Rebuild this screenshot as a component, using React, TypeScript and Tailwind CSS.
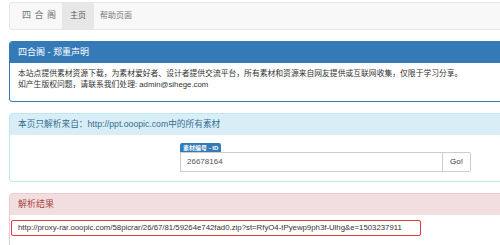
import React from "react";

export default function App() {
  return (
    <div
      className="w-[500px] h-[245px] overflow-hidden bg-white text-[#333] font-['Liberation_Sans','Noto_Sans_CJK_SC',sans-serif]"
    >
      <div className="pl-[9px] pt-[2px] w-[540px] flex flex-col">
        {/* navbar */}
        <div className="h-[28px] border border-[#e7e7e7] bg-[#f8f8f8] rounded-[3px] flex items-stretch">
          <div className="flex items-center pl-[12px] w-[52px] text-[9px] text-[#777] whitespace-nowrap tracking-[0.5px]">
            四 合 阁
          </div>
          <div className="flex items-center justify-center w-[32px] bg-[#e7e7e7] text-[8px] text-[#555]">
            主页
          </div>
          <div className="flex items-center pl-[6px] text-[8px] text-[#777]">帮助页面</div>
        </div>

        {/* panel primary */}
        <div className="mt-[11px] h-[61px] border border-[#337ab7] rounded-[3px] flex flex-col overflow-hidden">
          <div className="h-[21px] bg-[#337ab7] text-white text-[9px] flex items-center pl-[8px]">
            四合阁 - 郑重声明
          </div>
          <div className="flex-1 pl-[8px] pt-[5px] text-[7.8px] leading-[11px] text-[#333]">
            <div>本站点提供素材资源下载，为素材爱好者、设计者提供交流平台，所有素材和资源来自网友提供或互联网收集，仅限于学习分享。</div>
            <div>如产生版权问题，请联系我们处理: admin@sihege.com</div>
          </div>
        </div>

        {/* panel info */}
        <div className="mt-[11px] h-[69px] border border-[#bce8f1] rounded-[3px] flex flex-col overflow-hidden">
          <div className="h-[21px] bg-[#d9edf7] text-[#31708f] text-[8.7px] flex items-center pl-[8px]">
            本页只解析来自：http://ppt.ooopic.com中的所有素材
          </div>
          <div className="flex-1 pl-[170px] pt-[8px] flex flex-col items-start">
            <div className="h-[9px] px-[3px] bg-[#337ab7] text-white text-[6px] font-bold rounded-t-[2px] flex items-center leading-none">
              素材编号 - ID
            </div>
            <div className="flex h-[20px]">
              <div className="w-[263px] border border-[#ccc] flex items-center pl-[6px] text-[8px] text-[#555]">
                26678164
              </div>
              <div className="w-[28px] border border-l-0 border-[#ccc] rounded-r-[2px] flex items-center justify-center text-[8px] text-[#333]">
                Go!
              </div>
            </div>
          </div>
        </div>

        {/* panel danger */}
        <div className="mt-[11px] h-[60px] border border-[#ebccd1] rounded-[3px] flex flex-col overflow-hidden">
          <div className="h-[21px] bg-[#f2dede] text-[#a94442] text-[9px] flex items-center pl-[8px]">
            解析结果
          </div>
          <div className="pl-[1px] pt-[5px]">
            <div className="w-[410px] h-[16px] border-[1.5px] border-[#e0393e] rounded-[2px] flex items-center pl-[6px] text-[7.8px] text-[#333] whitespace-nowrap">
              http://proxy-rar.ooopic.com/58picrar/26/67/81/59264e742fad0.zip?st=RfyO4-tPyewp9ph3f-Ulhg&amp;e=1503237911
            </div>
          </div>
        </div>
      </div>
    </div>
  );
}
